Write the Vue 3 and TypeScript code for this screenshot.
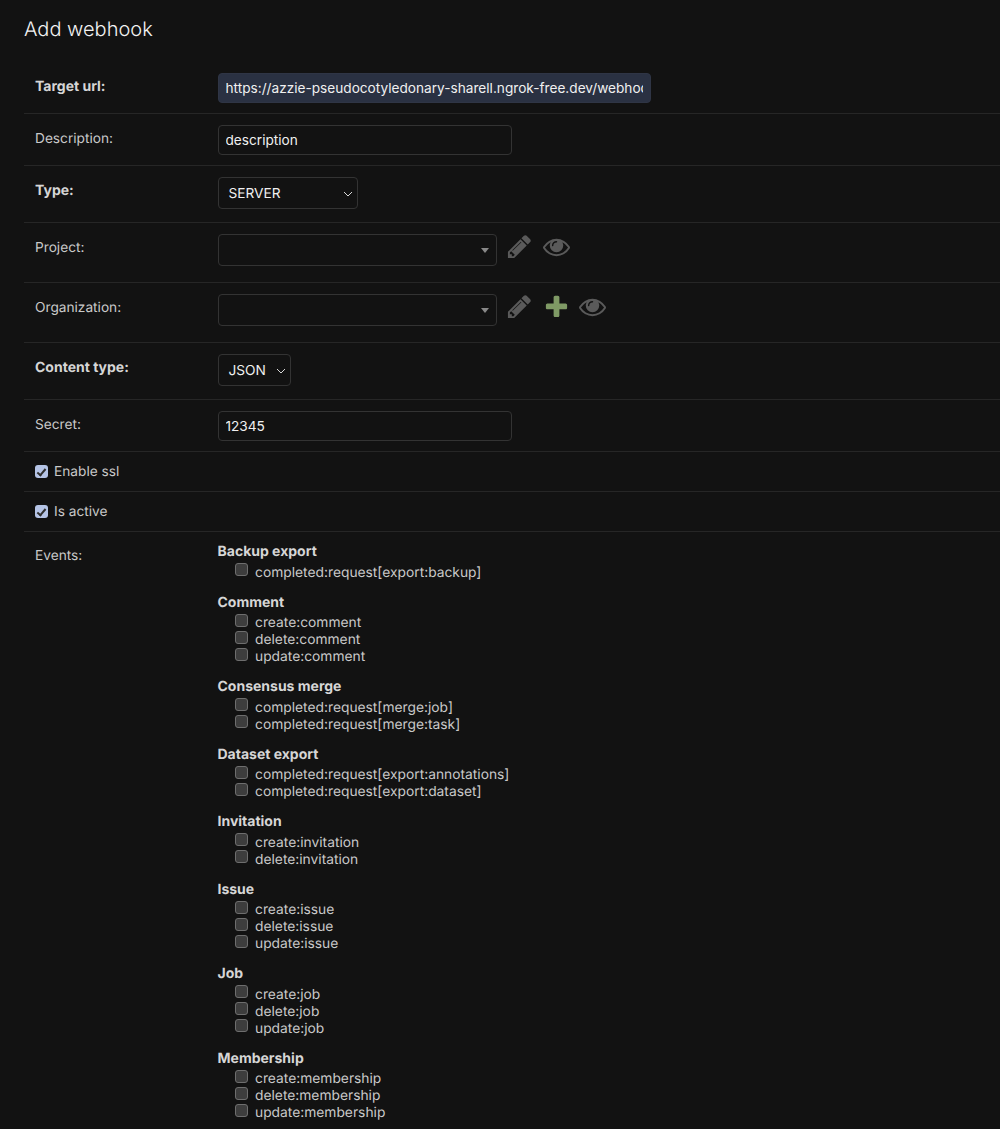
<script setup lang="ts">
interface Group { title: string; items: string[] }
const groups: Group[] = [
  { title: 'Backup export', items: ['completed:request[export:backup]'] },
  { title: 'Comment', items: ['create:comment', 'delete:comment', 'update:comment'] },
  { title: 'Consensus merge', items: ['completed:request[merge:job]', 'completed:request[merge:task]'] },
  { title: 'Dataset export', items: ['completed:request[export:annotations]', 'completed:request[export:dataset]'] },
  { title: 'Invitation', items: ['create:invitation', 'delete:invitation'] },
  { title: 'Issue', items: ['create:issue', 'delete:issue', 'update:issue'] },
  { title: 'Job', items: ['create:job', 'delete:job', 'update:job'] },
  { title: 'Membership', items: ['create:membership', 'delete:membership', 'update:membership'] },
]
const pencil = 'M491 1536l91-91-235-235-91 91v107h128v128h107zm523-928q0-22-22-22-10 0-17 7l-542 542q-7 7-7 17 0 22 22 22 10 0 17-7l542-542q7-7 7-17zm-54-192l416 416-832 832h-416v-416zm683 96q0 53-37 90l-166 166-416-416 166-165q36-38 90-38 53 0 91 38l235 234q37 39 37 91z'
const plus = 'M1600 796v192q0 40-28 68t-68 28h-416v416q0 40-28 68t-68 28h-192q-40 0-68-28t-28-68v-416h-416q-40 0-68-28t-28-68v-192q0-40 28-68t68-28h416v-416q0-40 28-68t68-28h192q40 0 68 28t28 68v416h416q40 0 68 28t28 68z'
const eye = 'M1664 960q-152-236-381-353 61 104 61 225 0 185-131.500 316.500t-316.500 131.500-316.500-131.500-131.500-316.500q0-121 61-225-229 117-381 353 133 205 333.500 326.500t434.500 121.500 434.500-121.500 333.500-326.500zm-720-384q0-20-14-34t-34-14q-125 0-214.500 89.500t-89.500 214.500q0 20 14 34t34 14 34-14 14-34q0-86 61-147t147-61q20 0 34-14t14-34zm848 384q0 34-20 69-140 230-376.500 368.500t-499.500 138.500-499.500-139-376.500-368q-20-35-20-69t20-69q140-229 376.500-368t499.500-139 499.500 139 376.500 368q20 35 20 69z'
</script>

<template>
  <main class="page">
    <h1 class="title">Add webhook</h1>
    <form class="form" @submit.prevent>
      <div class="row row-input">
        <label class="label strong">Target url:</label>
        <input class="input input-url" value="https://azzie-pseudocotyledonary-sharell.ngrok-free.dev/webhook" />
      </div>
      <div class="row row-input">
        <label class="label">Description:</label>
        <input class="input input-std" value="description" />
      </div>
      <div class="row row-select">
        <label class="label strong">Type:</label>
        <div class="select select-type">SERVER
          <svg class="chev" viewBox="0 0 10 6"><path d="M1 1l4 4 4-4" /></svg>
        </div>
      </div>
      <div class="row row-related">
        <label class="label">Project:</label>
        <div class="related">
          <div class="select select-rel"><span class="caret"></span></div>
          <svg class="icon" viewBox="0 0 1792 1792"><path class="grey" :d="pencil" /></svg>
          <svg class="icon" viewBox="0 0 1792 1792"><path class="grey" :d="eye" /></svg>
        </div>
      </div>
      <div class="row row-related">
        <label class="label">Organization:</label>
        <div class="related">
          <div class="select select-rel"><span class="caret"></span></div>
          <svg class="icon" viewBox="0 0 1792 1792"><path class="grey" :d="pencil" /></svg>
          <svg class="icon" viewBox="0 0 1792 1792"><path class="green" :d="plus" /></svg>
          <svg class="icon" viewBox="0 0 1792 1792"><path class="grey" :d="eye" /></svg>
        </div>
      </div>
      <div class="row row-select">
        <label class="label strong">Content type:</label>
        <div class="select select-content">JSON
          <svg class="chev" viewBox="0 0 10 6"><path d="M1 1l4 4 4-4" /></svg>
        </div>
      </div>
      <div class="row row-input">
        <label class="label">Secret:</label>
        <input class="input input-std" value="12345" />
      </div>
      <div class="row row-check">
        <label class="check-label"><input type="checkbox" class="cb on" checked /><span class="check-text">Enable ssl</span></label>
      </div>
      <div class="row row-check">
        <label class="check-label"><input type="checkbox" class="cb on" checked /><span class="check-text">Is active</span></label>
      </div>
      <div class="row row-events">
        <label class="label events-label">Events:</label>
        <div class="events">
          <section v-for="g in groups" :key="g.title" class="group">
            <h2 class="group-title">{{ g.title }}</h2>
            <div v-for="it in g.items" :key="it" class="event">
              <input type="checkbox" class="cb off" /><span>{{ it }}</span>
            </div>
          </section>
        </div>
      </div>
    </form>
  </main>
</template>

<style scoped>
.page {
  height: 1129px;
  overflow: hidden;
  box-sizing: border-box;
  padding: 16px 0 0 24px;
  background: #121212;
  color: #c9c9c9;
  font-family: Inter, "Liberation Sans", sans-serif;
  font-size: 13.7px;
  text-rendering: geometricPrecision;
}
.title {
  margin: 0 0 19px;
  font-size: 20px;
  line-height: 27px;
  font-weight: 300;
  color: #f2f2f2;
}
.row {
  display: flex;
  align-items: flex-start;
  box-sizing: border-box;
  padding: 11px 0 0 11px;
  border-bottom: 1px solid #262626;
}
.row-input { height: 52px; }
.row-select { height: 57px; }
.row-related { height: 60px; }
.row-check { height: 40px; padding-top: 0; align-items: center; }
.row-events { border-bottom: 0; }
.label {
  flex: 0 0 182.5px;
  line-height: 26px;
  padding-top: 1px;
}
.strong { font-weight: 700; font-size: 14px; color: #d6d6d6; }
.input {
  box-sizing: border-box;
  height: 30px;
  padding: 0 7px;
  border: 1px solid #333;
  border-radius: 4px;
  background: #121212;
  color: #f0f0f0;
  font: inherit;
  font-size: 13.65px;
  outline: none;
}
.input-std { width: 294px; }
.input-url { width: 433px; background: #2a3142; border-color: #2f3545; }
.select {
  position: relative;
  box-sizing: border-box;
  height: 32px;
  line-height: 32px;
  padding-left: 10px;
  border: 1px solid #333;
  border-radius: 4px;
  color: #f0f0f0;
}
.select-type { width: 140px; }
.select-content { width: 73px; }
.select-rel { width: 279px; }
.chev {
  position: absolute;
  right: 4px;
  top: 13px;
  width: 10px;
  height: 6px;
  fill: none;
  stroke: #d8d8d8;
  stroke-width: 1;
}
.caret {
  position: absolute;
  right: 7px;
  top: 13px;
  border-style: solid;
  border-width: 5px 4px 0;
  border-color: #888 transparent transparent;
}
.related { display: flex; align-items: flex-start; gap: 9.5px; }
.icon { width: 27px; height: 27px; flex: none; margin-top: -1px; }
.grey { fill: #5a5a5a; }
.green { fill: #7f9a65; }
.check-label {
  display: flex;
  align-items: center;
  gap: 6px;
}
.check-text { padding-top: 1px; }
.cb {
  appearance: none;
  position: relative;
  box-sizing: border-box;
  width: 13px;
  height: 13px;
  margin: 0;
  border-radius: 3px;
  flex: none;
}
.cb.on { background: #b5c4e6; }
.cb.on::after {
  content: "";
  position: absolute;
  left: 4px;
  top: 1.5px;
  width: 3px;
  height: 7px;
  border: solid #2f2f2f;
  border-width: 0 2px 2px 0;
  transform: rotate(40deg);
}
.cb.off { background: #3d3d3d; border: 1px solid #6e6e6e; }
.row-events { padding-top: 0; }
.events-label { padding-top: 11px; }
.events { padding-top: 11px; }
.group { margin-bottom: 12px; }
.group-title {
  margin: 0 0 4.5px;
  font-size: 14px;
  line-height: 17px;
  font-weight: 700;
  color: #d6d6d6;
}
.event {
  display: flex;
  align-items: flex-start;
  height: 17px;
  line-height: 17px;
  padding-left: 17px;
  font-size: 13.8px;
}
.event .cb { margin-top: -1.5px; margin-right: 7.5px; }
</style>

<style>
html, body { margin: 0; background: #121212; }
</style>
